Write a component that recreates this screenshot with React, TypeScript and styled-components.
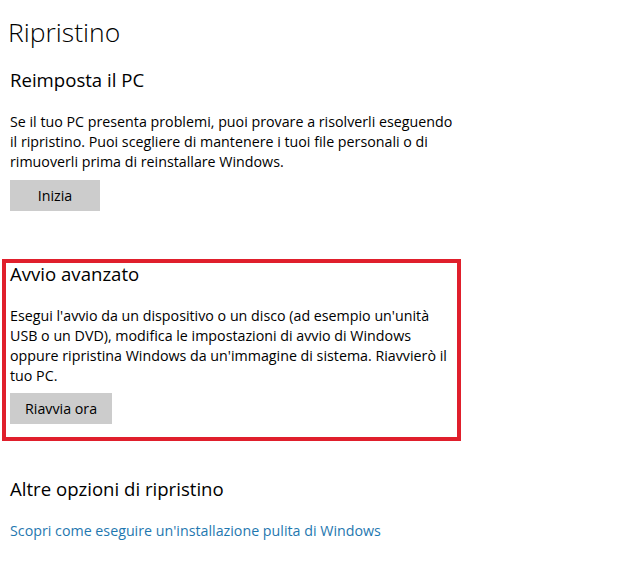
import * as React from 'react'
import styled, { createGlobalStyle } from 'styled-components'

const GlobalStyle = createGlobalStyle`
  body {
    margin: 0;
    background: #ffffff;
    font-family: 'Open Sans', 'Noto Sans', sans-serif;
    color: #000000;
  }
`

const App: React.FC = () => {
  return (
    <>
      <GlobalStyle />
      <Page>
        <Title>Ripristino</Title>

        <Section>
          <Heading>Reimposta il PC</Heading>
          <Text>
            Se il tuo PC presenta problemi, puoi provare a risolverli eseguendo
            <br />
            il ripristino. Puoi scegliere di mantenere i tuoi file personali o di
            <br />
            rimuoverli prima di reinstallare Windows.
          </Text>
          <Button $minWidth={90}>Inizia</Button>
        </Section>

        <Highlight>
          <Heading>Avvio avanzato</Heading>
          <Text>
            Esegui l'avvio da un dispositivo o un disco (ad esempio un'unità
            <br />
            USB o un DVD), modifica le impostazioni di avvio di Windows
            <br />
            oppure ripristina Windows da un'immagine di sistema. Riavvierò il
            <br />
            tuo PC.
          </Text>
          <Button $minWidth={100}>Riavvia ora</Button>
        </Highlight>

        <Section>
          <Heading>Altre opzioni di ripristino</Heading>
          <Link href="#">Scopri come eseguire un'installazione pulita di Windows</Link>
        </Section>
      </Page>
    </>
  )
}

export default App

// Styles
const Page = styled.div`
  width: 620px;
  height: 575px;
  padding: 14px 0 0 8px;
  box-sizing: border-box;
  overflow: hidden;
`

const Title = styled.h1`
  font-size: 26.5px;
  font-weight: 300;
  line-height: 36px;
  margin: 0 0 19px;
`

const Section = styled.div`
  display: flex;
  flex-direction: column;
  align-items: flex-start;
  padding-left: 2px;
`

const Heading = styled.h2`
  font-size: 18.6px;
  font-weight: 400;
  line-height: 22px;
  margin: 0 0 21px;
`

const Text = styled.p`
  font-size: 14.25px;
  line-height: 20px;
  margin: 0 0 8px;
  white-space: nowrap;
`

const Button = styled.button<{ $minWidth: number }>`
  min-width: ${(p) => p.$minWidth}px;
  height: 31px;
  padding: 0 15px;
  border: none;
  background: #cccccc;
  font-family: inherit;
  font-size: 14.25px;
  color: #000000;
`

const Highlight = styled.div`
  display: flex;
  flex-direction: column;
  align-items: flex-start;
  width: 459px;
  box-sizing: border-box;
  margin: 48px 0 37px -6px;
  padding: 0 0 13px 4px;
  border: 4px solid #e01f2c;

  p {
    margin-bottom: 7px;
  }
`

const Link = styled.a`
  font-size: 14.25px;
  line-height: 20px;
  color: #1f78b0;
  text-decoration: none;
`
